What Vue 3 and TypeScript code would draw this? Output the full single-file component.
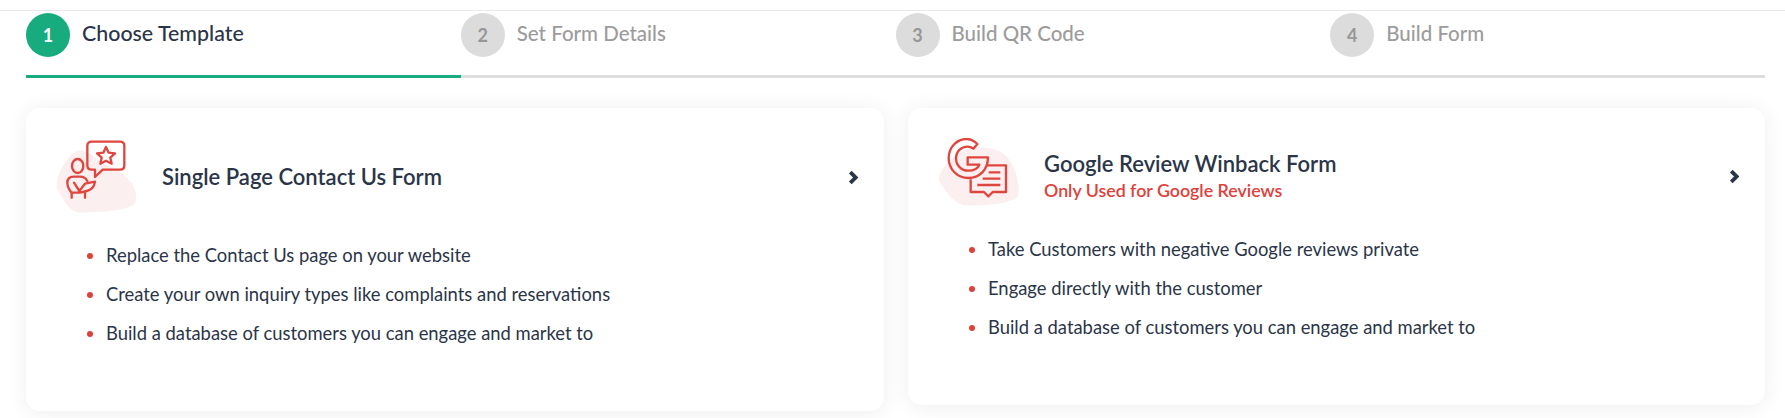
<template>
  <div class="page">
    <div class="wizard">
      <div
        v-for="(step, i) in steps"
        :key="step"
        class="step"
        :class="{ active: i === 0 }"
      >
        <span class="step-num">{{ i + 1 }}</span>
        <span class="step-label">{{ step }}</span>
      </div>
    </div>

    <div class="cards">
      <div class="card card-tall">
        <div class="card-head">
          <svg class="card-icon" viewBox="60 54 270 228" fill="none" stroke="#e0463f" stroke-width="7" stroke-linecap="round" stroke-linejoin="round">
            <path class="blob" d="M150 88C185 90 200 122 245 140C290 158 325 200 318 240C310 268 230 272 150 275C115 272 100 235 82 205C70 175 115 90 150 88Z" />
            <path d="M185 62H270Q283 62 283 75V133Q283 146 270 146H218L195 168V146H185Q172 146 172 133V75Q172 62 185 62Z" />
            <path d="M228 78L236 95L255 97L241 110L245 128L228 119L211 128L215 110L201 97L220 95Z" />
            <ellipse cx="143" cy="135" rx="17" ry="21" />
            <path d="M125 230V215Q112 200 112 185Q112 167 132 167H150Q165 167 172 180" />
            <path d="M132 185L148 210L165 188L195 182Q192 205 170 210L150 215H125" />
            <path d="M165 230V212" />
          </svg>
          <div class="card-title">
            <h3>Single Page Contact Us Form</h3>
          </div>
          <svg class="chevron" viewBox="0 0 10 14" fill="none" stroke="#2b3548" stroke-width="3.6">
            <path d="M2 2L7 7L2 12" />
          </svg>
        </div>
        <ul>
          <li v-for="item in contactPoints" :key="item">{{ item }}</li>
        </ul>
      </div>

      <div class="card">
        <div class="card-head">
          <svg class="card-icon" viewBox="36 54 270 228" fill="none" stroke="#e0463f" stroke-width="7" stroke-linejoin="round">
            <path class="blob" d="M150 84C190 78 235 82 262 112C285 140 300 190 295 225C285 250 200 258 130 256C95 245 70 205 56 180C52 150 110 95 150 84Z" />
            <path d="M172 72C160 60 148 57 140 57C110 57 86 82 86 115C86 148 112 174 145 174C178 174 204 150 204 112H143V134H178C172 148 160 152 145 152C124 152 108 136 108 115C108 94 124 80 142 80C150 80 156 83 160 86Z" />
            <path d="M198 136H258V216H218L205 229L192 216H152V178" />
            <path d="M206 157H241M188 176H241M172 195H241" />
          </svg>
          <div class="card-title">
            <h3>Google Review Winback Form</h3>
            <p class="note">Only Used for Google Reviews</p>
          </div>
          <svg class="chevron" viewBox="0 0 10 14" fill="none" stroke="#2b3548" stroke-width="3.6">
            <path d="M2 2L7 7L2 12" />
          </svg>
        </div>
        <ul>
          <li v-for="item in googlePoints" :key="item">{{ item }}</li>
        </ul>
      </div>
    </div>
  </div>
</template>

<script setup lang="ts">
const steps: string[] = ['Choose Template', 'Set Form Details', 'Build QR Code', 'Build Form']

const contactPoints: string[] = [
  'Replace the Contact Us page on your website',
  'Create your own inquiry types like complaints and reservations',
  'Build a database of customers you can engage and market to'
]

const googlePoints: string[] = [
  'Take Customers with negative Google reviews private',
  'Engage directly with the customer',
  'Build a database of customers you can engage and market to'
]
</script>

<style>
html,
body {
  margin: 0;
  background: #fff;
}
</style>

<style scoped>
.page {
  height: 418px;
  box-sizing: border-box;
  padding: 10px 20px 0 26px;
  overflow: hidden;
  font-family: Lato, "Open Sans", sans-serif;
  color: #2b3548;
}

.page::before {
  content: "";
  display: block;
  height: 1px;
  margin: 0 -20px 0 -26px;
  background: #e9e9e9;
}

.wizard {
  display: grid;
  grid-template-columns: repeat(4, 1fr);
  margin-top: 2px;
  height: 65px;
  box-sizing: border-box;
  border-bottom: 3px solid #dedede;
}

.step {
  display: flex;
  gap: 12px;
  height: 65px;
  box-sizing: border-box;
  color: #9c9c9c;
  font-size: 20.5px;
  font-weight: 500;
}

.step.active {
  border-bottom: 3px solid #17ab7e;
  color: #2b3548;
  font-size: 21.4px;
}

.step-num {
  width: 44px;
  height: 44px;
  border-radius: 50%;
  background: #dcdcdc;
  color: #979797;
  display: flex;
  align-items: center;
  justify-content: center;
  font-size: 18px;
  font-weight: 700;
}

.active .step-num {
  background: #17ab7e;
  color: #fff;
}

.step-label {
  line-height: 41px;
}

.cards {
  display: grid;
  grid-template-columns: 858px 857px;
  gap: 24px;
  align-items: start;
  margin-top: 30px;
}

.card {
  background: #fff;
  border-radius: 14px;
  box-shadow: 0 2px 22px rgba(0, 0, 0, 0.07);
  height: 297px;
  box-sizing: border-box;
  padding: 30px 24px 0;
}

.card-tall {
  height: 303px;
  padding-top: 31px;
}

.card-head {
  display: flex;
  align-items: center;
  gap: 22px;
}

.card-icon {
  width: 90px;
  height: 76px;
  flex: none;
}

.blob {
  fill: #fbf0ef;
  stroke: none;
}

.card-title {
  flex: 1;
}

h3 {
  margin: 0;
  font-size: 22px;
  font-weight: 600;
  line-height: 26px;
}

.note {
  margin: 2px 0 0;
  font-size: 17.8px;
  font-weight: 600;
  line-height: 22px;
  color: #e0403a;
}

.chevron {
  width: 11px;
  height: 15px;
  flex: none;
  margin-right: 1px;
}

ul {
  margin: 23px 0 0;
  padding: 0 0 0 56px;
  list-style: disc;
}

.card-tall ul {
  margin-top: 28px;
}

li {
  font-size: 18.4px;
  line-height: 24px;
  margin-bottom: 15px;
}

li::marker {
  color: #e0403a;
}
</style>
